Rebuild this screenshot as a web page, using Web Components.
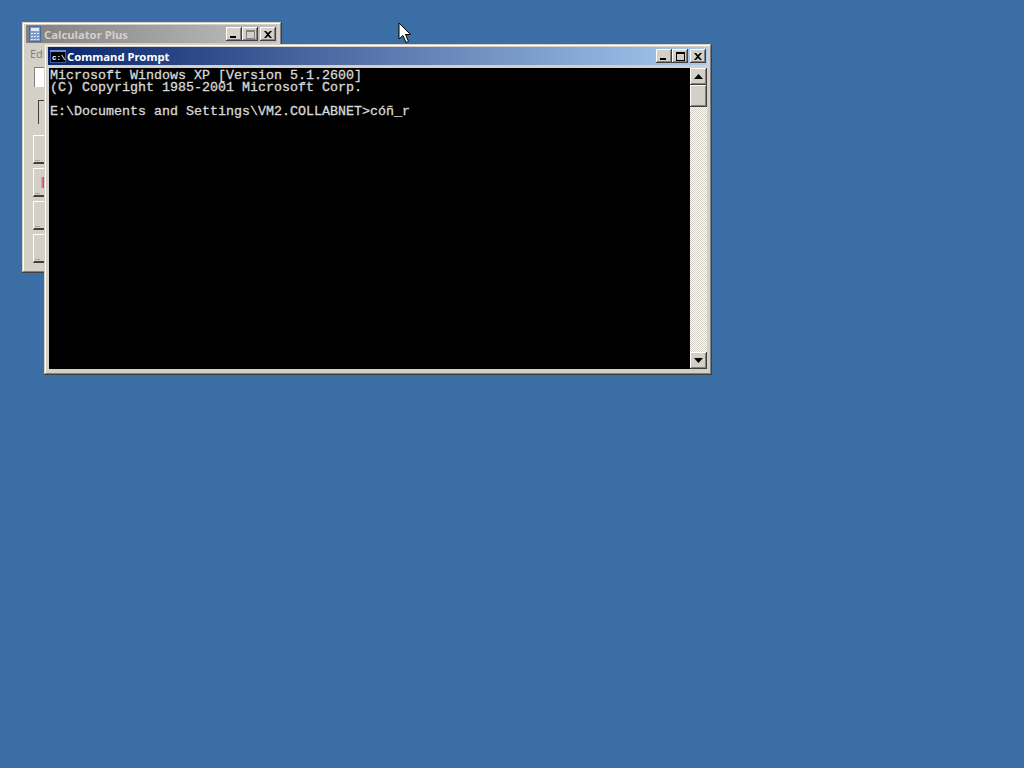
<!DOCTYPE html>
<html>
<head>
<meta charset="utf-8">
<title>Command Prompt</title>
<style>
html, body { margin: 0; height: 100%; overflow: hidden; background: #3a6ea5; }
</style>
</head>
<body>
<xp-desktop>
  <xp-window title="Calculator Plus" icon="calc" style="left:22px;top:22px;width:260px;height:251px;z-index:1">
    <calc-body></calc-body>
  </xp-window>
  <xp-window active title="Command Prompt" icon="cmd" style="left:44px;top:44px;width:668px;height:331px;z-index:2">
    <xp-console></xp-console>
  </xp-window>
  <xp-cursor style="left:398px;top:22px;z-index:3"></xp-cursor>
</xp-desktop>

<script>
class XpDesktop extends HTMLElement {
    constructor() {
        super();
        this.attachShadow({ mode: 'open' });
        this.shadowRoot.innerHTML = `
        <style>
            :host { display: block; position: relative; width: 1024px; height: 768px; background: #3a6ea5; overflow: hidden; }
        </style>
        <slot></slot>`;
    }
}

const ICONS = {
    calc: `<svg width="12" height="16" viewBox="0 0 12 16" style="margin:0 2px 0 1px">
        <rect x="0.5" y="0.5" width="11" height="15" fill="#7f9cc8" stroke="#46689c"/>
        <rect x="2" y="2" width="8" height="3" fill="#dfe8f2"/>
        <path d="M2 7h2v1H2zM5 7h2v1H5zM8 7h2v1H8zM2 10h2v1H2zM5 10h2v1H5zM8 10h2v1H8zM2 13h2v1H2zM5 13h2v1H5zM8 13h2v1H8z" fill="#e8eef6"/>
    </svg>`,
    cmd: `<svg width="16" height="13" viewBox="0 0 16 13">
        <rect width="16" height="13" fill="#3c5a9c"/>
        <rect x="0" y="0" width="16" height="2" fill="#6c8cc8"/>
        <rect x="1" y="2" width="14" height="10" fill="#000"/>
        <text x="2" y="10" font-family="'Liberation Mono',monospace" font-size="7.5" font-weight="700" fill="#fff">c:\\</text>
    </svg>`
};

class XpWindow extends HTMLElement {
    constructor() {
        super();
        this.attachShadow({ mode: 'open' });
    }

    connectedCallback() {
        const title = this.getAttribute('title') || '';
        const icon = ICONS[this.getAttribute('icon')] || '';
        this.shadowRoot.innerHTML = `
        <style>
            :host {
                display: flex; flex-direction: column; position: absolute; box-sizing: border-box;
                padding: 3px 5px 5px 4px; background: #d4d0c8;
                box-shadow: inset -1px -1px #404040, inset 1px 1px #d4d0c8, inset -2px -2px #808080, inset 2px 2px #fff;
            }
            .bar {
                display: flex; align-items: center; height: 18px; flex: none; padding: 0 1px 0 2px; gap: 1px;
                background: linear-gradient(90deg, #808080, #c0c0c0);
                color: #d4d0c8;
                font: 700 11.3px "Noto Sans", "Open Sans", sans-serif;
            }
            :host([active]) .bar { background: linear-gradient(90deg, #0a246a, #a6caf0); color: #fff; }
            .title { flex: 1; white-space: nowrap; overflow: hidden; }
            .ico { display: flex; flex: none; }
            .btns { display: flex; flex: none; }
            .btn {
                width: 16px; height: 14px; box-sizing: border-box; display: flex; align-items: center; justify-content: center;
                background: #d4d0c8;
                box-shadow: inset -1px -1px #404040, inset 1px 1px #fff, inset -2px -2px #808080;
            }
            .btn.close { margin-left: 2px; }
            .content { flex: 1; min-height: 0; display: flex; margin-top: 2px; }
            ::slotted(*) { flex: 1; min-width: 0; }
        </style>
        <div class="bar">
            <span class="ico">${icon}</span>
            <span class="title">${title}</span>
            <span class="btns">
                <span class="btn"><svg width="8" height="8" viewBox="0 0 8 8"><rect x="0" y="6" width="6" height="2" fill="#000"/></svg></span>
                <span class="btn max"><svg width="9" height="9" viewBox="0 0 9 9"><path d="M0 0h9v9H0z M1 2v6h7V2z" fill="${this.hasAttribute('active') ? '#000' : '#808080'}" fill-rule="evenodd"/></svg></span>
                <span class="btn close"><svg width="8" height="7" viewBox="0 0 8 7"><path d="M0 0h2l2 2 2-2h2L5 3.500 8 7H6L4 5 2 7H0l3-3.500z" fill="#000"/></svg></span>
            </span>
        </div>
        <div class="content"><slot></slot></div>`;
    }
}

class XpConsole extends HTMLElement {
    constructor() {
        super();
        this.attachShadow({ mode: 'open' });
        this.shadowRoot.innerHTML = `
        <style>
            :host { display: flex; background: #000; height: 301px; margin: 1px 0 0 1px; }
            pre {
                flex: 1; margin: 0; padding: 2px 0 0 1px; color: #d8d8d8;
                font: 400 13.33px/12px "Liberation Mono", monospace;
                -webkit-text-stroke: 0.3px #d8d8d8;
                overflow: hidden;
            }
        </style>
        <pre>Microsoft Windows XP [Version 5.1.2600]
(C) Copyright 1985-2001 Microsoft Corp.

E:\\Documents and Settings\\VM2.COLLABNET&gt;cóñ_r</pre>
        <xp-scrollbar></xp-scrollbar>`;
    }
}

class XpScrollbar extends HTMLElement {
    constructor() {
        super();
        this.attachShadow({ mode: 'open' });
        this.shadowRoot.innerHTML = `
        <style>
            :host {
                display: flex; flex-direction: column; width: 17px; flex: none;
                background: conic-gradient(#fff 25%, #d4d0c8 0 50%, #fff 0 75%, #d4d0c8 0) 0 0 / 2px 2px;
            }
            .b {
                flex: none; box-sizing: border-box; width: 17px; height: 17px; background: #d4d0c8;
                display: flex; align-items: center; justify-content: center;
                box-shadow: inset -1px -1px #404040, inset 1px 1px #fff, inset -2px -2px #808080;
            }
            .thumb { height: 22px; }
            .gap { flex: 1; }
        </style>
        <div class="b"><svg width="9" height="5" viewBox="0 0 9 5"><path d="M4.500 0L9 5H0z" fill="#000"/></svg></div>
        <div class="b thumb"></div>
        <div class="gap"></div>
        <div class="b"><svg width="9" height="5" viewBox="0 0 9 5"><path d="M0 0h9L4.500 5z" fill="#000"/></svg></div>`;
    }
}

// only the left edge of this window shows, the console covers the rest
class CalcBody extends HTMLElement {
    constructor() {
        super();
        this.attachShadow({ mode: 'open' });
        this.shadowRoot.innerHTML = `
        <style>
            :host { display: flex; flex-direction: column; font: 11px "Noto Sans", sans-serif; color: #808080; }
            .menu { height: 16px; line-height: 16px; padding-left: 4px; margin-top: 1px; }
            .display { height: 20px; width: 220px; margin: 5px 0 0 8px; background: #fff; box-shadow: inset 1px 1px #808080; }
            .top { width: 30px; height: 24px; margin: 13px 0 0 12px; box-shadow: inset 1px 1px #404040; }
            .keys { display: flex; flex-direction: column; gap: 4px; margin: 11px 0 0 7px; }
            .key { width: 40px; height: 29px; box-sizing: border-box; border-top: 1px solid #fff; border-left: 1px solid #fff; border-bottom: 2px solid #404040; position: relative; }
            .key::before { content: ""; position: absolute; left: 1px; bottom: 1px; width: 5px; height: 1px; background: #a8a49c; }
            .key.red::after { content: ""; position: absolute; left: 7px; top: 8px; width: 3px; height: 11px; background: linear-gradient(90deg, #f0a8b8, #d8385c); }
        </style>
        <div class="menu">Edit</div>
        <div class="display"></div>
        <div class="top"></div>
        <div class="keys">
            <div class="key"></div>
            <div class="key red"></div>
            <div class="key"></div>
            <div class="key"></div>
        </div>`;
    }
}

class XpCursor extends HTMLElement {
    constructor() {
        super();
        this.attachShadow({ mode: 'open' });
        this.shadowRoot.innerHTML = `
        <style>
            :host { display: block; position: absolute; width: 14px; height: 22px; }
            svg { display: block; }
        </style>
        <svg width="14" height="22" viewBox="0 0 14 22">
            <path d="M1 1V17L5 13.500 8 20.500 10.500 19.500 7.500 12.500H12.500z" fill="#fff" stroke="#000" stroke-width="1"/>
        </svg>`;
    }
}

customElements.define('xp-desktop', XpDesktop);
customElements.define('xp-window', XpWindow);
customElements.define('xp-console', XpConsole);
customElements.define('xp-scrollbar', XpScrollbar);
customElements.define('calc-body', CalcBody);
customElements.define('xp-cursor', XpCursor);
</script>
</body>
</html>
